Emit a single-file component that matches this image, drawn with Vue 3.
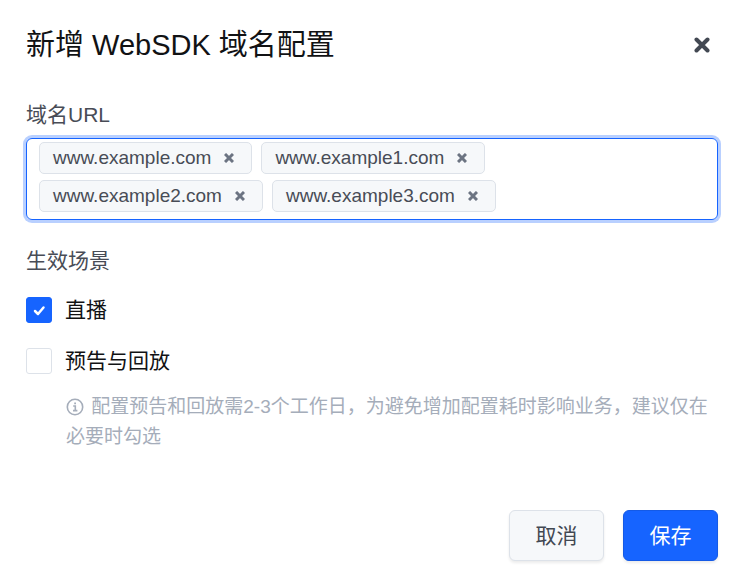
<template>
  <form class="dialog" role="dialog" aria-labelledby="dialog-title" @submit.prevent>
    <header class="dialog__header">
      <h1 id="dialog-title" class="dialog__title">新增 WebSDK 域名配置</h1>
      <button type="button" class="dialog__close" aria-label="关闭">
        <svg viewBox="0 0 16 16" width="16" height="16">
          <path d="M2.5 2.5 13.5 13.5M13.5 2.5 2.5 13.5" />
        </svg>
      </button>
    </header>

    <label class="dialog__label" for="domain">域名URL</label>
    <div class="tags" @click="inputRef.focus()">
      <span v-for="(domain, index) in domains" :key="domain" class="tags__item">
        {{ domain }}
        <button
          type="button"
          class="tags__remove"
          :aria-label="`删除 ${domain}`"
          @click.stop="removeDomain(index)"
        >
          <svg viewBox="0 0 10 10" width="10" height="10">
            <path d="M1 1 9 9M9 1 1 9" />
          </svg>
        </button>
      </span>
      <input
        id="domain"
        ref="inputRef"
        v-model="draft"
        class="tags__input"
        type="text"
        @keydown.enter.prevent="addDomain"
      />
    </div>

    <fieldset class="scenes">
      <legend class="dialog__label">生效场景</legend>
      <label class="scenes__option">
        <input v-model="live" class="scenes__box" type="checkbox" />
        <svg class="scenes__check" viewBox="0 0 26 26">
          <path d="M9 14 12 17 17.5 10.5" />
        </svg>
        直播
      </label>
      <label class="scenes__option">
        <input v-model="replay" class="scenes__box" type="checkbox" />
        <svg class="scenes__check" viewBox="0 0 26 26">
          <path d="M9 14 12 17 17.5 10.5" />
        </svg>
        预告与回放
      </label>
      <p class="scenes__hint">
        <svg class="scenes__info" viewBox="0 0 18 18" width="18" height="18">
          <circle cx="9" cy="9" r="7.7" />
          <path d="M7.2 8H9.3V12.6M7 12.6H11.4" />
          <path class="scenes__dot" d="M8.2 4.5H10V6.2H8.2Z" />
        </svg>
        配置预告和回放需2-3个工作日，为避免增加配置耗时影响业务，建议仅在必要时勾选
      </p>
    </fieldset>

    <footer class="dialog__footer">
      <button type="button" class="btn">取消</button>
      <button type="submit" class="btn btn--primary">保存</button>
    </footer>
  </form>
</template>

<script setup>
import { ref } from 'vue'

const domains = ref([
  'www.example.com',
  'www.example1.com',
  'www.example2.com',
  'www.example3.com',
])
const draft = ref('')
const live = ref(true)
const replay = ref(false)
const inputRef = ref(null)

function addDomain() {
  const value = draft.value.trim()
  if (value && !domains.value.includes(value)) domains.value.push(value)
  draft.value = ''
}

function removeDomain(index) {
  domains.value.splice(index, 1)
}
</script>

<style>
body {
  background: #fff;
}
</style>

<style scoped>
.dialog {
  padding: 24px 30px 26px 26px;
  font-family: 'Liberation Sans', 'Noto Sans CJK SC', sans-serif;
  font-size: 21px;
  line-height: 30px;
  color: #111214;
}

.dialog * {
  box-sizing: border-box;
}

.dialog svg {
  fill: none;
  stroke: currentColor;
}

.dialog__header {
  display: flex;
  align-items: center;
  justify-content: space-between;
  margin-bottom: 34px;
}

.dialog__title {
  margin: 0;
  font-size: 29px;
  font-weight: 400;
  line-height: 42px;
}

.dialog__close {
  display: flex;
  padding: 8px;
  border: 0;
  background: none;
  color: #424852;
  cursor: pointer;
}

.dialog__close svg {
  stroke-width: 4;
  stroke-linecap: round;
}

.dialog__label {
  display: block;
  margin-bottom: 8px;
  padding: 0;
  color: #484c56;
}

/* Domaines */
.tags {
  display: flex;
  flex-wrap: wrap;
  gap: 6px 9px;
  min-height: 51px;
  padding: 3px 12px 7px;
  border: 1px solid #1664ff;
  border-radius: 6px;
  box-shadow: 0 0 0 3px #b9d0ff;
  cursor: text;
}

.tags__item {
  display: flex;
  align-items: center;
  gap: 8px;
  height: 32px;
  padding: 0 12px 0 13px;
  border: 1px solid #dde2e9;
  border-radius: 5px;
  background: #f6f8fa;
  font-size: 19px;
  line-height: 30px;
  color: #484c56;
}

.tags__remove {
  display: flex;
  padding: 5px;
  border: 0;
  background: none;
  color: #6c7482;
  cursor: pointer;
}

.tags__remove svg {
  stroke-width: 3;
}

.tags__input {
  flex: 1;
  width: 40px;
  min-width: 40px;
  height: 32px;
  padding: 0;
  border: 0;
  outline: 0;
  background: none;
  font: inherit;
  font-size: 19px;
}

/* Scènes */
.scenes {
  min-width: 0;
  margin: 26px 0 0;
  padding: 0;
  border: 0;
}

.scenes__option {
  position: relative;
  display: flex;
  align-items: center;
  gap: 13px;
  margin-top: 21px;
  cursor: pointer;
}

.scenes .dialog__label {
  margin-bottom: 19px;
}

.dialog__label + .scenes__option {
  margin-top: 0;
}

.scenes__box {
  appearance: none;
  width: 26px;
  height: 26px;
  margin: 0;
  border: 1px solid #dde2e9;
  border-radius: 3px;
  background: #fff;
}

.scenes__box:checked {
  border-color: #1664ff;
  background: #1664ff;
}

.scenes__check {
  position: absolute;
  left: 0;
  width: 26px;
  height: 26px;
  color: #fff;
  stroke-width: 2.5;
  stroke-linecap: round;
  stroke-linejoin: round;
  pointer-events: none;
}

.scenes__hint {
  margin: 16px 0 0 40px;
  font-size: 19px;
  line-height: 30px;
  color: #a5adba;
}

.scenes__info {
  margin-right: 2px;
  vertical-align: -3px;
  stroke-width: 1.6;
}

.dialog .scenes__dot {
  fill: currentColor;
  stroke: none;
}

/* Actions */
.dialog__footer {
  display: flex;
  justify-content: flex-end;
  gap: 19px;
  margin-top: 58px;
}

.btn {
  min-width: 95px;
  height: 51px;
  padding: 0 20px;
  border: 1px solid #dde2e9;
  border-radius: 6px;
  background: #f6f8fa;
  box-shadow: 0 2px 3px rgba(0, 0, 0, 0.08);
  font: inherit;
  color: #424852;
  cursor: pointer;
}

.btn--primary {
  border-color: #145ae6;
  background: #1664ff;
  color: #fff;
}
</style>
